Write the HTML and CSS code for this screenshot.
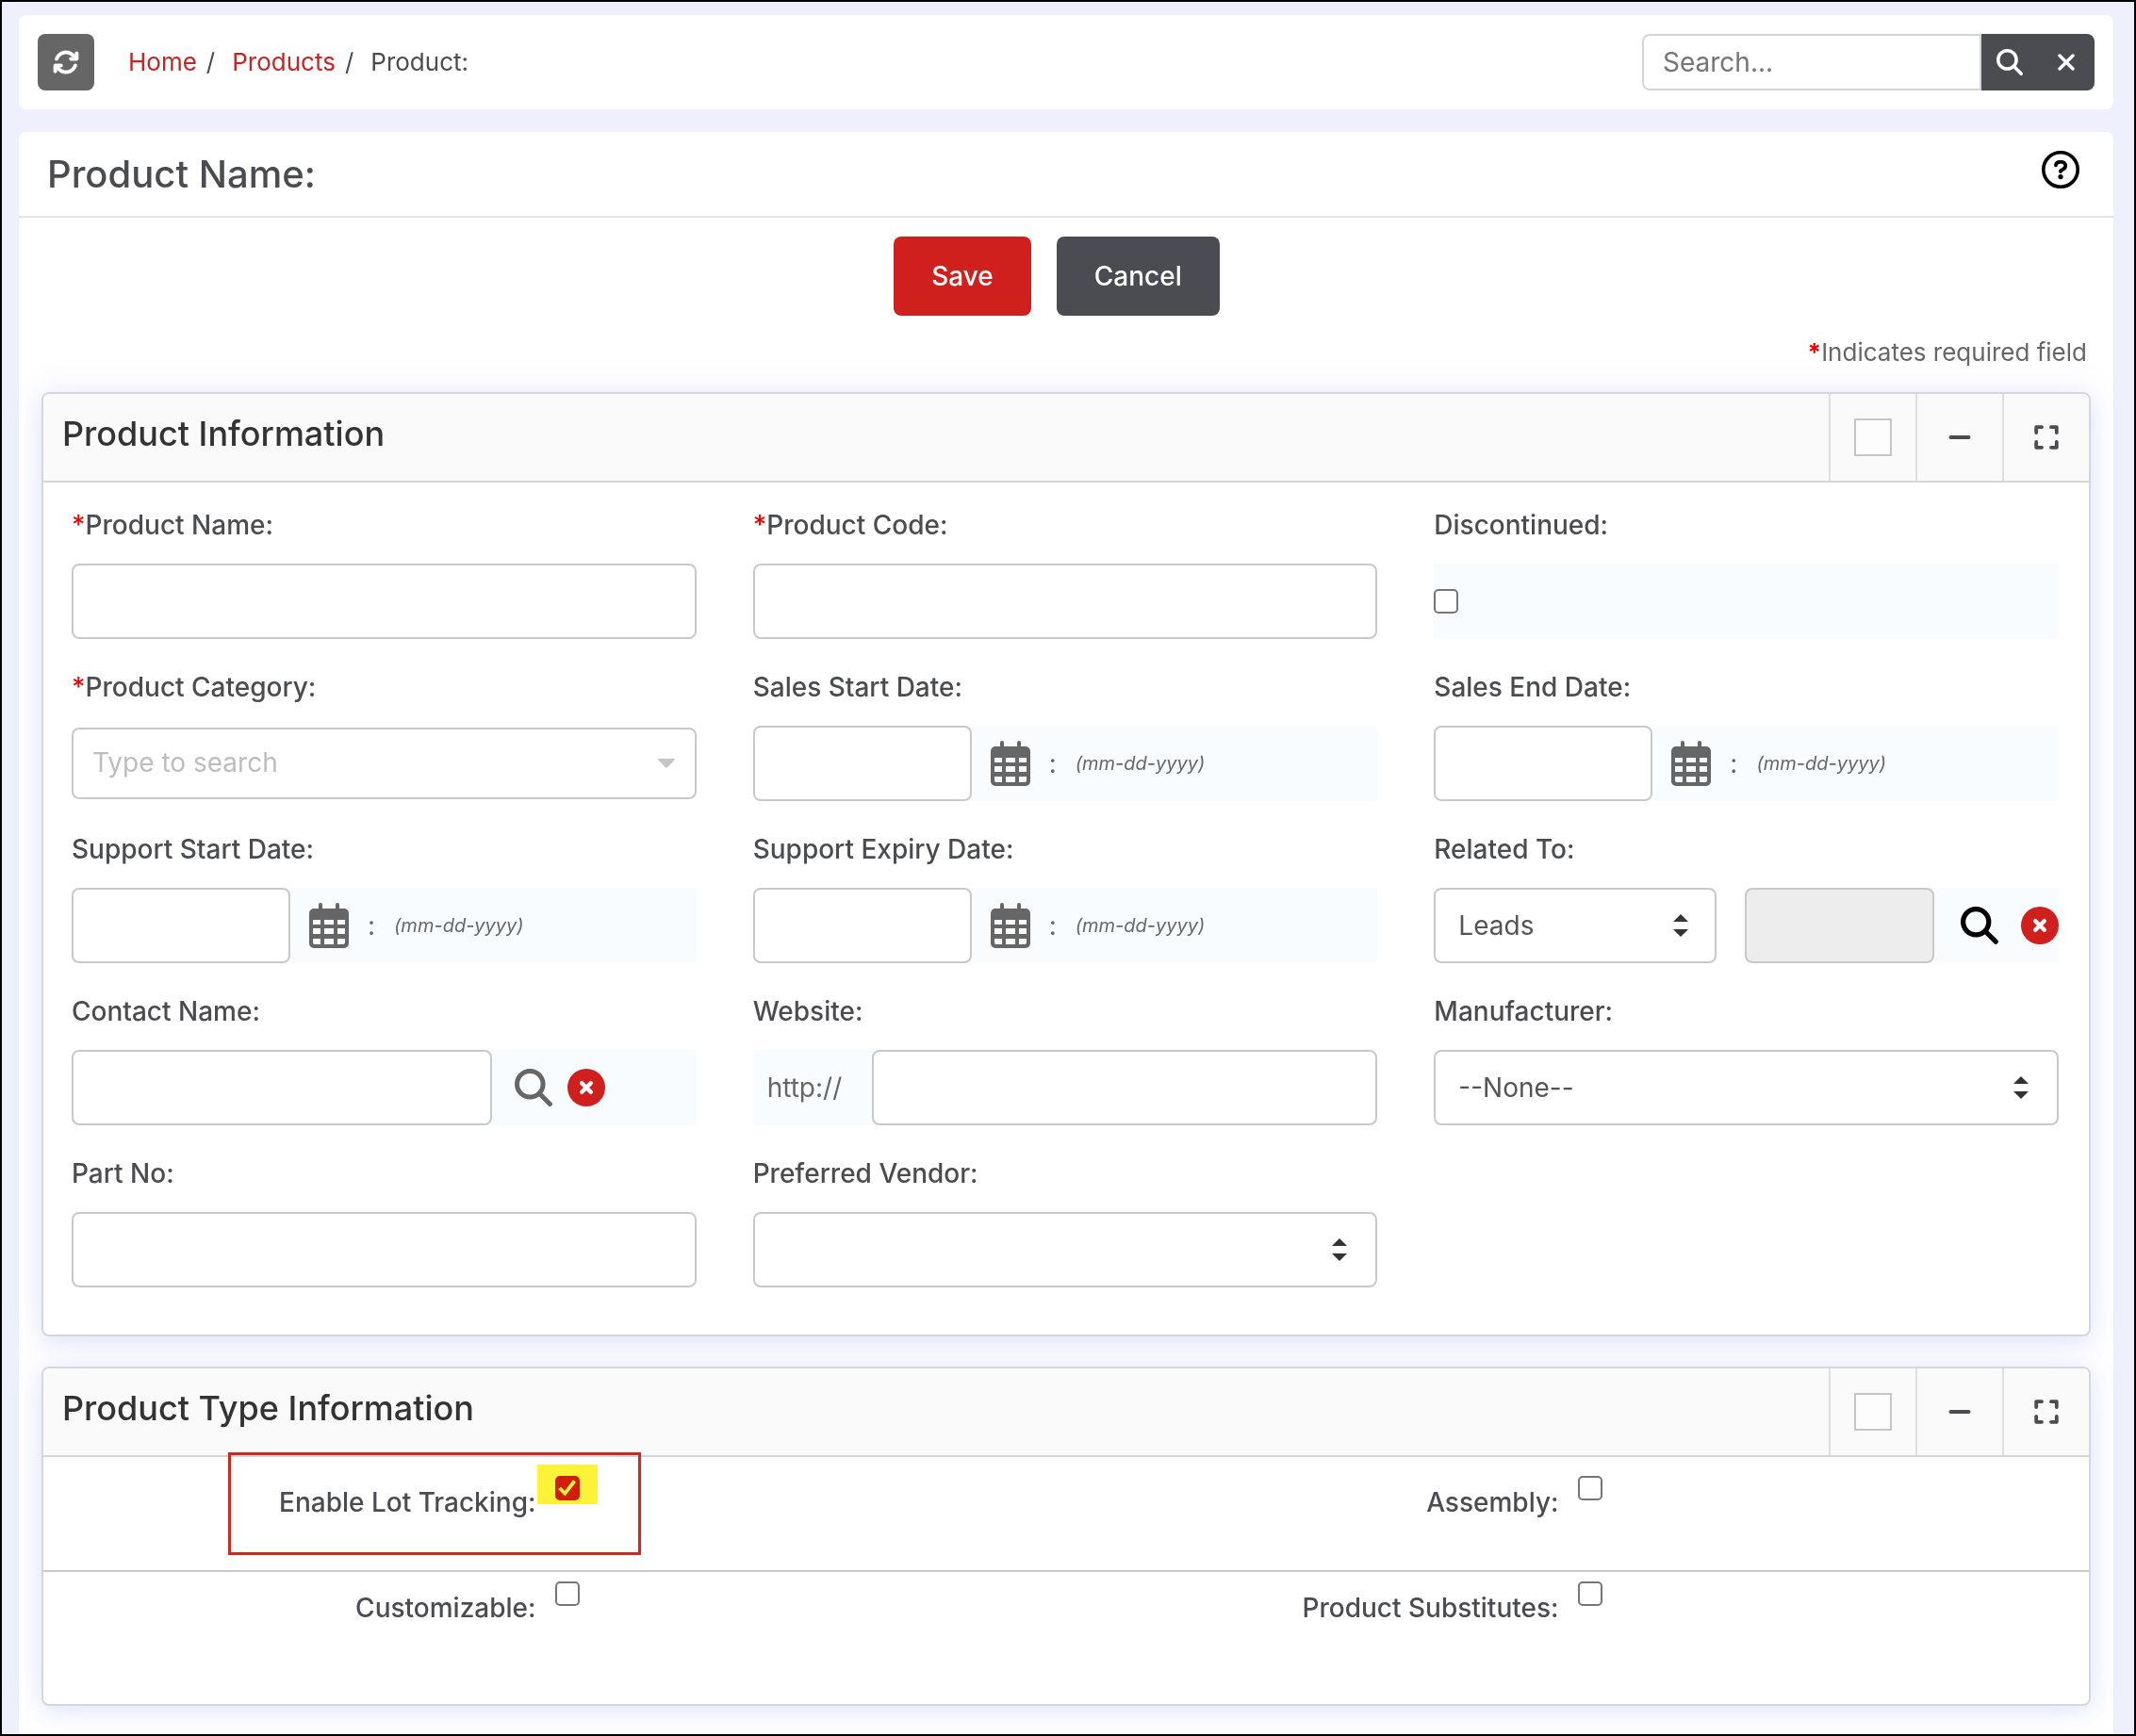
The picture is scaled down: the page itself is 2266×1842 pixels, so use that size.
FILE: index.html
```html
<!DOCTYPE html>
<html lang="en">
<head>
<meta charset="utf-8">
<meta name="viewport" content="width=device-width, initial-scale=1">
<title>Product</title>
<link rel="stylesheet" href="styles.css">
</head>
<body>
<svg class="sprite" aria-hidden="true">
  <symbol id="calendar" viewBox="0 0 42 48">
    <path fill="currentColor" fill-rule="evenodd" d="M10 2a2 2 0 0 1 4 0v4h14V2a2 2 0 0 1 4 0v4h5a5 5 0 0 1 5 5v32a5 5 0 0 1-5 5H5a5 5 0 0 1-5-5V11a5 5 0 0 1 5-5h5zM4 18v5h8v-5zM16 18v5h10v-5zM30 18v5h8v-5zM4 27v6h8v-6zM16 27v6h10v-6zM30 27v6h8v-6zM4 38v4a2 2 0 0 0 2 2h6v-6zM16 38v6h10v-6zM30 38v6h6a2 2 0 0 0 2-2v-4z"/>
  </symbol>
  <symbol id="search" viewBox="0 0 40 40">
    <g fill="none" stroke="currentColor" stroke-width="5" stroke-linecap="round"><circle cx="16.3" cy="16.3" r="13.8"/><path d="M26.5 26.5L37.4 37.4"/></g>
  </symbol>
  <symbol id="search-bold" viewBox="0 0 40 40">
    <g fill="none" stroke="currentColor" stroke-width="5.2" stroke-linecap="round"><circle cx="16.2" cy="16.2" r="13.6"/><path d="M26.5 26.5L37.2 37.2"/></g>
  </symbol>
  <symbol id="clear" viewBox="0 0 40 40">
    <circle cx="20" cy="20" r="20" fill="#d0201e"/><path d="M15.2 15.2L24.8 24.8M24.8 15.2L15.2 24.8" stroke="#fff" stroke-width="4.4" stroke-linecap="round"/>
  </symbol>
  <symbol id="sort" viewBox="0 0 16 24">
    <path fill="#333" d="M8 0L16 8H0zM0 16H16L8 24z"/>
  </symbol>
  <symbol id="minus" viewBox="0 0 24 24">
    <path d="M2.5 12H21.5" stroke="currentColor" stroke-width="4" stroke-linecap="round"/>
  </symbol>
  <symbol id="expand" viewBox="0 0 26 26">
    <path d="M2.2 8V2.2H8M18 2.2H23.8V8M23.8 18V23.8H18M8 23.8H2.2V18" fill="none" stroke="currentColor" stroke-width="3.8" stroke-linecap="round" stroke-linejoin="round"/>
  </symbol>
</svg>

<div class="page">
  <header class="topbar">
    <button class="refresh" type="button" aria-label="Refresh">
      <svg width="28" height="28" viewBox="0 0 512 512"><path fill="#fff" stroke="#fff" stroke-width="8" d="M105.1 202.6c7.700-21.800 20.200-42.300 37.800-59.800c62.500-62.500 163.800-62.500 226.300 0L386.300 160H352c-17.700 0-32 14.300-32 32s14.300 32 32 32h111.500c0 0 0 0 0 0h.4c17.700 0 32-14.300 32-32V80c0-17.700-14.300-32-32-32s-32 14.300-32 32v35.200L414.400 97.600c-87.500-87.500-229.300-87.500-316.800 0C73.200 122 55.600 150.700 44.800 181.400c-5.900 16.700 2.900 34.900 19.500 40.800s34.900-2.900 40.800-19.500zM39 289.300c-5 1.500-9.800 4.200-13.700 8.200c-4 4-6.700 8.800-8.100 14c-.3 1.200-.6 2.500-.8 3.800c-.3 1.700-.4 3.400-.4 5.100V432c0 17.700 14.300 32 32 32s32-14.300 32-32v-35.100l17.600 17.500c87.500 87.400 229.300 87.400 316.700 0c24.400-24.400 42.100-53.100 52.900-83.700c5.900-16.700-2.900-34.900-19.500-40.800s-34.900 2.900-40.800 19.500c-7.700 21.800-20.200 42.300-37.800 59.800c-62.500 62.500-163.800 62.500-226.300 0l-.1-.1L125.600 352H160c17.700 0 32-14.300 32-32s-14.300-32-32-32H48.400c-1.600 0-3.200.1-4.800.3s-3.100.5-4.600 1z"/></svg>
    </button>
    <nav class="crumbs" aria-label="Breadcrumb">
      <a href="#">Home</a><span class="slash">/</span>
      <a href="#">Products</a><span class="slash">/</span>
      <span>Product:</span>
    </nav>
    <form class="search" role="search">
      <input class="search-input" type="text" placeholder="Search..." aria-label="Search">
      <div class="search-actions">
        <button type="button" aria-label="Search"><svg width="28" height="28"><use href="#search"/></svg></button>
        <button type="button" aria-label="Clear search"><svg width="18" height="18" viewBox="0 0 18 18"><path d="M2 2L16 16M16 2L2 16" stroke="#fff" stroke-width="3.400" stroke-linecap="round"/></svg></button>
      </div>
    </form>
  </header>

  <main class="card">
    <div class="card-head">
      <h1>Product Name:</h1>
      <button class="icon-btn help" type="button" aria-label="Help">
        <svg width="40" height="40" viewBox="0 0 40 40"><circle cx="20" cy="20" r="18.200" fill="none" stroke="#000" stroke-width="3.600"/><path d="M14.900 15.300c.4-2.200 1.900-3.400 4-3.400h2.300c2.300 0 4.100 1.700 4.100 3.900 0 1.700-.9 2.800-2.300 3.600L20 21.100v1" fill="none" stroke="#000" stroke-width="3.800" stroke-linecap="round" stroke-linejoin="round"/><circle cx="20" cy="27.600" r="2.600"/></svg>
      </button>
    </div>
    <div class="actions">
      <button class="btn btn-save" type="submit">Save</button>
      <button class="btn btn-cancel" type="button">Cancel</button>
    </div>
    <p class="required-note"><span class="req">*</span>Indicates required field</p>

    <section class="panel">
      <div class="panel-head">
        <h2>Product Information</h2>
        <div class="tool"><input class="head-check" type="checkbox" aria-label="Select Product Information"></div>
        <button class="tool" type="button" aria-label="Collapse"><svg width="24" height="24"><use href="#minus"/></svg></button>
        <button class="tool" type="button" aria-label="Expand"><svg width="26" height="26"><use href="#expand"/></svg></button>
      </div>
      <div class="fields">
        <div class="field">
          <label for="name"><span class="req">*</span>Product Name:</label>
          <input class="text" id="name" type="text">
        </div>
        <div class="field">
          <label for="code"><span class="req">*</span>Product Code:</label>
          <input class="text" id="code" type="text">
        </div>
        <div class="field">
          <label for="discontinued">Discontinued:</label>
          <div class="group"><input class="check" id="discontinued" type="checkbox"></div>
        </div>

        <div class="field">
          <label for="category"><span class="req">*</span>Product Category:</label>
          <div class="combo">
            <input class="text combo-input" id="category" type="text" placeholder="Type to search">
            <svg class="combo-arrow" width="18" height="10" viewBox="0 0 18 10"><path fill="#c4c4c4" d="M1 0H17Q18.500 0 17.500 1.500L10 9.300Q9 10.200 8 9.300L.5 1.500Q-.5 0 1 0z"/></svg>
          </div>
        </div>
        <div class="field">
          <label for="sales-start">Sales Start Date:</label>
          <div class="group">
            <input class="text date" id="sales-start" type="text">
            <button class="icon-btn cal" type="button" aria-label="Pick date"><svg width="42" height="48"><use href="#calendar"/></svg></button>
            <span class="colon">:</span><em class="hint">(mm-dd-yyyy)</em>
          </div>
        </div>
        <div class="field">
          <label for="sales-end">Sales End Date:</label>
          <div class="group">
            <input class="text date" id="sales-end" type="text">
            <button class="icon-btn cal" type="button" aria-label="Pick date"><svg width="42" height="48"><use href="#calendar"/></svg></button>
            <span class="colon">:</span><em class="hint">(mm-dd-yyyy)</em>
          </div>
        </div>

        <div class="field">
          <label for="support-start">Support Start Date:</label>
          <div class="group">
            <input class="text date" id="support-start" type="text">
            <button class="icon-btn cal" type="button" aria-label="Pick date"><svg width="42" height="48"><use href="#calendar"/></svg></button>
            <span class="colon">:</span><em class="hint">(mm-dd-yyyy)</em>
          </div>
        </div>
        <div class="field">
          <label for="support-expiry">Support Expiry Date:</label>
          <div class="group">
            <input class="text date" id="support-expiry" type="text">
            <button class="icon-btn cal" type="button" aria-label="Pick date"><svg width="42" height="48"><use href="#calendar"/></svg></button>
            <span class="colon">:</span><em class="hint">(mm-dd-yyyy)</em>
          </div>
        </div>
        <div class="field">
          <label for="related">Related To:</label>
          <div class="related">
            <div class="select related-type">
              <select id="related"><option>Leads</option></select>
              <svg width="16" height="24"><use href="#sort"/></svg>
            </div>
            <div class="group related-pick">
              <input class="text related-name" type="text" aria-label="Related record" disabled>
              <button class="icon-btn black" type="button" aria-label="Find record"><svg width="40" height="40"><use href="#search-bold"/></svg></button>
              <button class="icon-btn" type="button" aria-label="Clear record"><svg width="40" height="40"><use href="#clear"/></svg></button>
            </div>
          </div>
        </div>

        <div class="field">
          <label for="contact">Contact Name:</label>
          <div class="group">
            <input class="text contact" id="contact" type="text">
            <button class="icon-btn find" type="button" aria-label="Find contact"><svg width="40" height="40"><use href="#search"/></svg></button>
            <button class="icon-btn" type="button" aria-label="Clear contact"><svg width="40" height="40"><use href="#clear"/></svg></button>
          </div>
        </div>
        <div class="field">
          <label for="website">Website:</label>
          <div class="group">
            <span class="scheme">http://</span>
            <input class="text website" id="website" type="text">
          </div>
        </div>
        <div class="field">
          <label for="manufacturer">Manufacturer:</label>
          <div class="select">
            <select id="manufacturer"><option>--None--</option></select>
            <svg width="16" height="24"><use href="#sort"/></svg>
          </div>
        </div>

        <div class="field">
          <label for="part">Part No:</label>
          <input class="text" id="part" type="text">
        </div>
        <div class="field">
          <label for="vendor">Preferred Vendor:</label>
          <div class="select">
            <select id="vendor"><option></option></select>
            <svg width="16" height="24"><use href="#sort"/></svg>
          </div>
        </div>
      </div>
    </section>

    <section class="panel">
      <div class="panel-head">
        <h2>Product Type Information</h2>
        <div class="tool"><input class="head-check" type="checkbox" aria-label="Select Product Type Information"></div>
        <button class="tool" type="button" aria-label="Collapse"><svg width="24" height="24"><use href="#minus"/></svg></button>
        <button class="tool" type="button" aria-label="Expand"><svg width="26" height="26"><use href="#expand"/></svg></button>
      </div>
      <div class="type-row type-row-first">
        <label for="lot">Enable Lot Tracking:</label>
        <div class="type-value"><input class="check" id="lot" type="checkbox" checked></div>
        <label for="assembly">Assembly:</label>
        <div class="type-value"><input class="check" id="assembly" type="checkbox"></div>
        <div class="marker"></div>
        <div class="outline"></div>
      </div>
      <div class="type-row type-row-last">
        <label for="custom">Customizable:</label>
        <div class="type-value"><input class="check" id="custom" type="checkbox"></div>
        <label for="subs">Product Substitutes:</label>
        <div class="type-value"><input class="check" id="subs" type="checkbox"></div>
      </div>
    </section>
  </main>
</div>
</body>
</html>
```
FILE: styles.css
```css
* {
  box-sizing: border-box;
}

body {
  margin: 0;
  font-family: Inter, "Liberation Sans", sans-serif;
  font-size: 28px;
  line-height: 34px;
  color: #4b4c51;
}

button,
input,
select {
  margin: 0;
  font: inherit;
  color: inherit;
}

button {
  padding: 0;
  border: 0;
  background: none;
  cursor: pointer;
}

svg {
  display: block;
}

.sprite {
  position: absolute;
  width: 0;
  height: 0;
}

.page {
  display: flex;
  flex-direction: column;
  gap: 24px;
  min-height: 100vh;
  overflow: hidden;
  padding: 14px 22px 0 18px;
  border: 2px solid #000;
  background: #eef0fd;
}

/* Top bar */

.topbar {
  display: flex;
  align-items: center;
  padding: 20px;
  border-radius: 8px;
  background: #fff;
}

.refresh {
  display: grid;
  place-items: center;
  width: 60px;
  height: 60px;
  border-radius: 8px;
  background: #666;
}

.crumbs {
  display: flex;
  margin-left: 36px;
  font-size: 26px;
  line-height: 32px;
}

.crumbs a {
  color: #c42525;
  text-decoration: none;
}

.slash {
  margin: 0 18px 0 10px;
}

.search {
  display: flex;
  width: 480px;
  margin-left: auto;
}

.search-input {
  flex: 1;
  min-width: 0;
  height: 60px;
  padding: 0 20px;
  border: 2px solid #d4d5d9;
  border-radius: 8px 0 0 8px;
  background: #fff;
}

.search-input::placeholder {
  color: #757575;
  opacity: 1;
}

.search-actions {
  display: grid;
  grid-template-columns: 1fr 1fr;
  width: 120px;
  border-radius: 0 8px 8px 0;
  background: #4b4c51;
}

.search-actions button {
  display: grid;
  place-items: center;
  color: #fff;
}

/* Card */

.card {
  flex: 1;
  border-radius: 8px 8px 0 0;
  background: #fff;
}

.card-head {
  display: flex;
  align-items: center;
  justify-content: space-between;
  height: 91px;
  padding: 0 36px 0 30px;
  border-bottom: 2px solid #e2e2e2;
}

h1 {
  margin: 0;
  font-size: 40px;
  font-weight: 500;
  line-height: 48px;
}

.help {
  margin-bottom: 10px;
}

.actions {
  display: flex;
  justify-content: center;
  gap: 27px;
  padding: 20px 20px 0 0;
}

.btn {
  height: 84px;
  padding: 0 40px;
  border-radius: 8px;
  font-weight: 500;
  color: #fff;
}

.btn-save {
  background: #d0201e;
}

.btn-cancel {
  background: #4b4c51;
}

.required-note {
  margin: 23px 28px 26px;
  font-size: 26px;
  line-height: 32px;
  text-align: right;
  color: #666;
}

.req {
  color: #f00000;
}

.required-note .req {
  font-weight: 700;
}

/* Panels */

.panel {
  margin: 0 24px 32px;
  border: 2px solid #d5d7de;
  border-radius: 8px;
  background: #fff;
  box-shadow: 0 6px 20px rgba(60, 120, 220, 0.1), 0 0 40px rgba(90, 90, 240, 0.1);
}

.panel:last-child {
  margin-bottom: 28px;
}

.panel-head {
  display: flex;
  height: 94px;
  border-bottom: 2px solid #d5d6da;
  border-radius: 6px 6px 0 0;
  background: #fafafa;
}

h2 {
  flex: 1;
  margin: 0;
  padding: 20px 0 0 20px;
  font-size: 36px;
  font-weight: 500;
  line-height: 44px;
  color: #333;
}

.tool {
  display: grid;
  place-items: center;
  width: 92px;
  border-left: 2px solid #dfdfe1;
}

.head-check {
  appearance: none;
  width: 40px;
  height: 40px;
  border: 2px solid #c6c6c6;
  background: #fdfdfd;
}

.fields {
  display: grid;
  grid-template-columns: repeat(3, minmax(0, 1fr));
  gap: 34px 60px;
  padding: 28px 32px 50px 30px;
}

.field {
  display: flex;
  flex-direction: column;
  gap: 24px;
}

label {
  font-weight: 500;
}

.text,
.select select {
  width: 100%;
  height: 80px;
  padding: 0 22px;
  border: 2px solid #c9c9c9;
  border-radius: 8px;
  background: #fff;
}

.text:disabled {
  background: #ededee;
}

.group {
  display: flex;
  align-items: center;
  height: 80px;
  background: #f9fcff;
}

.check {
  appearance: none;
  display: grid;
  place-items: center;
  flex: none;
  width: 26px;
  height: 26px;
  border: 2px solid #767676;
  border-radius: 5px;
  background: #fff;
}

.check:checked {
  border-color: #d01f1c;
  background: #d01f1c;
}

.check:checked::before {
  content: "";
  width: 20px;
  height: 18px;
  background: #fff;
  clip-path: polygon(3% 56%, 18% 43%, 38% 66%, 82% 2%, 98% 14%, 40% 97%);
}

.combo,
.select {
  display: grid;
  align-items: center;
}

.combo {
  height: 80px;
}

.combo > *,
.select > * {
  grid-area: 1 / 1;
}

.combo-input {
  height: 76px;
  padding: 0 20px 2px;
}

.combo-input::placeholder {
  color: #bdbdbd;
  opacity: 1;
}

.combo-arrow {
  justify-self: end;
  margin-right: 23px;
}

.select select {
  appearance: none;
  padding: 0 24px;
  color: #555;
}

.select svg {
  justify-self: end;
  margin-right: 32px;
  pointer-events: none;
}

.related-type svg {
  margin-right: 30px;
}

.date {
  flex: none;
  width: 232px;
}

.icon-btn {
  flex: none;
  color: #666;
}

.cal {
  margin-left: 20px;
}

.colon {
  margin: 0 20px;
  color: #666;
}

.hint {
  font-size: 20px;
  color: #666;
}

.related {
  display: flex;
  gap: 30px;
}

.related-type {
  width: 300px;
}

.related-pick {
  flex: 1;
  justify-content: space-between;
}

.related-name {
  width: 201px;
}

.black {
  margin-left: 4px;
  color: #000;
}

.contact {
  width: 446px;
}

.find {
  margin: 0 16px 0 24px;
}

.scheme {
  padding: 0 32px 0 15px;
  color: #666;
}

.website {
  flex: 1;
}

/* Product type rows */

.type-row {
  position: relative;
  display: grid;
  grid-template-columns: repeat(4, 1fr);
}

.type-row label {
  padding: 11px 20px 0 0;
  text-align: right;
}

.type-row-first {
  height: 122px;
  padding-top: 20px;
  border-bottom: 2px solid #ccc;
}

.type-row-last {
  height: 140px;
  padding-top: 10px;
}

.marker {
  position: absolute;
  top: 8px;
  left: 524px;
  width: 64px;
  height: 42px;
  background: #fff33a;
  mix-blend-mode: multiply;
}

.outline {
  position: absolute;
  top: -5px;
  left: 196px;
  width: 438px;
  height: 109px;
  border: 3px solid #cd2a1f;
}
```
